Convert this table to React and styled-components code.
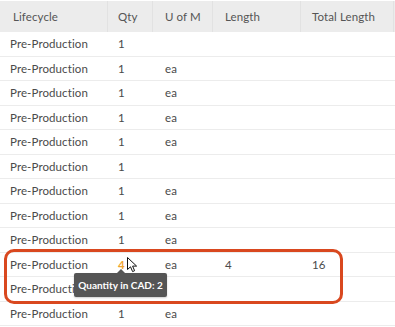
import React from "react";
import styled, { createGlobalStyle } from "styled-components";

const Global = createGlobalStyle`
  html, body { margin: 0; padding: 0; background: #fff; }
  body { font-family: Lato, "Open Sans", sans-serif; overflow: hidden; }
`;

const cols = "108px 45px 60px 88px 93px 1fr";

const Table = styled.div`
  width: 395px;
  padding-top: 1px;
`;

const HeaderRow = styled.div`
  display: grid;
  grid-template-columns: ${cols};
  height: 31px;
  background: #ececec;
`;

const HeaderCell = styled.div`
  display: flex;
  align-items: center;
  padding-left: ${(p) => p.$pad ?? 11}px;
  font-size: 11.5px;
  letter-spacing: 0.1px;
  color: #555555;
  border-right: 1px solid #e2e2e2;
  white-space: nowrap;
`;

const Row = styled.div`
  display: grid;
  grid-template-columns: ${cols};
  height: 24.5px;
  box-sizing: border-box;
  border-bottom: 1px solid #ececec;
`;

const Cell = styled.div`
  display: flex;
  align-items: center;
  padding-left: ${(p) => p.$pad ?? 11}px;
  font-size: 11.5px;
  letter-spacing: 0.1px;
  color: ${(p) => (p.$accent ? "#f1a431" : "#4a4a4a")};
  font-weight: ${(p) => (p.$accent ? 700 : 400)};
  white-space: nowrap;
`;

const Highlight = styled.div`
  position: absolute;
  left: 4px;
  top: 249px;
  width: 339px;
  height: 55px;
  box-sizing: border-box;
  border: 3px solid #d9481f;
  border-radius: 10px;
  pointer-events: none;
`;

const Tooltip = styled.div`
  position: absolute;
  left: 74px;
  top: 273px;
  width: 93px;
  height: 24px;
  background: #555555;
  color: #fff;
  font-size: 10px;
  font-weight: 700;
  display: flex;
  align-items: center;
  justify-content: center;
  border-radius: 2px;
  box-shadow: 0 1px 2px rgba(0,0,0,0.2);
  &::before {
    content: "";
    position: absolute;
    top: -4px;
    left: 43px;
    border-left: 4px solid transparent;
    border-right: 4px solid transparent;
    border-bottom: 4px solid #555555;
  }
`;

const Cursor = styled.svg`
  position: absolute;
  left: 127px;
  top: 257px;
`;

const Page = styled.div`
  position: relative;
  width: 395px;
  height: 327px;
  overflow: hidden;
`;

const rows = [
  { u: "" },
  { u: "ea" },
  { u: "ea" },
  { u: "ea" },
  { u: "ea" },
  { u: "" },
  { u: "ea" },
  { u: "ea" },
  { u: "ea" },
  { u: "ea", q: "4", len: "4", total: "16", accent: true },
  { u: "", q: "" },
  { u: "ea" },
];

export default function App() {
  return (
    <Page>
      <Global />
      <Table>
        <HeaderRow>
          <HeaderCell $pad={13}>Lifecycle</HeaderCell>
          <HeaderCell $pad={10}>Qty</HeaderCell>
          <HeaderCell $pad={12}>U of M</HeaderCell>
          <HeaderCell $pad={12}>Length</HeaderCell>
          <HeaderCell $pad={11}>Total Length</HeaderCell>
          <HeaderCell />
        </HeaderRow>
        {rows.map((r, i) => (
          <Row key={i}>
            <Cell $pad={10}>Pre-Production</Cell>
            <Cell $pad={10} $accent={r.accent}>{r.q ?? "1"}</Cell>
            <Cell $pad={12}>{r.u}</Cell>
            <Cell $pad={12}>{r.len || ""}</Cell>
            <Cell $pad={11}>{r.total || ""}</Cell>
            <Cell />
          </Row>
        ))}
      </Table>
      <Highlight />
      <Tooltip>Quantity in CAD: 2</Tooltip>
      <Cursor width="12" height="16" viewBox="0 0 12 16">
        <path d="M0.5 0.5 L0.5 12.5 L3.5 9.8 L5.6 14.6 L7.6 13.7 L5.6 9.1 L9.6 9.1 Z" fill="#fff" stroke="#111" strokeWidth="1" strokeLinejoin="round" />
      </Cursor>
    </Page>
  );
}
